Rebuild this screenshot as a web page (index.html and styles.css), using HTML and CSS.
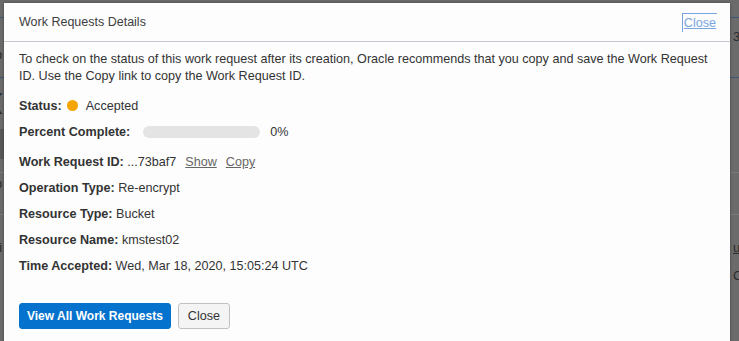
FILE: index.html
```html
<!DOCTYPE html>
<html lang="en">
<head>
<meta charset="utf-8">
<title>Work Requests Details</title>
<link rel="stylesheet" href="styles.css">
</head>
<body>
<div class="backdrop">
  <div class="bline blue l1"></div>
  <div class="btext t1"><span>r</span><span>3</span></div>
  <div class="btext t2"><span>p</span><span></span></div>
  <div class="bline blue l2"></div>
  <div class="btext t3"><span>(</span><span></span></div>
  <div class="bbox"></div>
  <div class="bline gray l3"></div>
  <div class="btext t4"><span>o</span><span></span></div>
  <div class="bline gray l4"></div>
  <div class="btext t5"><span>ri</span><span class="u">us</span></div>
  <div class="btext t6"><span>:</span><span>C</span></div>
  <div class="btext t7"><span>r</span><span></span></div>
</div>

<div class="modal" role="dialog" aria-labelledby="mtitle">
  <div class="modal-header">
    <h1 id="mtitle" class="modal-title">Work Requests Details</h1>
    <a href="#" class="close-link">Close</a>
  </div>
  <div class="modal-body">
    <p class="intro">To check on the status of this work request after its creation, Oracle recommends that you copy and save the Work Request ID. Use the Copy link to copy the Work Request ID.</p>
    <div class="row status-row"><span class="label">Status:</span><span class="dot"></span><span class="status-text">Accepted</span></div>
    <div class="row pct-row"><span class="label">Percent Complete:</span><span class="bar"><span class="fill" style="width:0%"></span></span><span class="pct">0%</span></div>
    <div class="row"><span class="label">Work Request ID:</span> <span>...73baf7</span><a href="#" class="act">Show</a><a href="#" class="act">Copy</a></div>
    <div class="row"><span class="label">Operation Type:</span> Re-encrypt</div>
    <div class="row"><span class="label">Resource Type:</span> Bucket</div>
    <div class="row"><span class="label">Resource Name:</span> kmstest02</div>
    <div class="row"><span class="label">Time Accepted:</span> Wed, Mar 18, 2020, 15:05:24 UTC</div>
    <div class="actions">
      <button class="btn primary">View All Work Requests</button>
      <button class="btn secondary">Close</button>
    </div>
  </div>
</div>
</body>
</html>
```
FILE: styles.css
```css
* { box-sizing: border-box; }
html, body { margin: 0; padding: 0; }
body {
  width: 739px;
  height: 341px;
  overflow: hidden;
  background: #6b6b6b;
  font-family: "Liberation Sans", Arial, sans-serif;
  font-size: 12.6px;
  color: #333;
  position: relative;
}

/* dimmed page underneath */
.backdrop { width: 739px; height: 341px; }
.bline { height: 1px; }
.bline.blue { background: #3e5774; }
.bline.gray { background: #7a7a7a; }
.l1 { margin-top: 17px; }
.btext {
  display: flex;
  justify-content: space-between;
  height: 18px;
  line-height: 18px;
  font-size: 13px;
  color: #2a2a2a;
}
.btext span { width: 12px; }
.btext span:first-child { margin-left: -5px; }
.btext span:last-child { margin-right: -6px; text-align: left; }
.btext .u { text-decoration: underline; }
.t1 { margin-top: 10px; }
.t2 { margin-top: 0; }
.l2 { margin-top: 13px; }
.t3 { margin-top: 15px; font-size: 22px; }
.bbox { margin-top: 18px; height: 30px; width: 6px; background: #585858; }
.l3 { margin-top: 13px; }
.t4 { margin-top: 2px; }
.l4 { margin-top: 21px; }
.t5 { margin-top: 24px; }
.t6 { margin-top: 10px; }
.t7 { margin-top: 8px; }

/* dialog */
.modal {
  position: absolute;
  left: 4px;
  top: 3px;
  width: 726px;
  height: 360px;
  background: #fdfdfd;
  box-shadow: 0 0 3px rgba(0,0,0,0.35);
}
.modal-header {
  height: 39px;
  border-bottom: 1px solid #c4c8d0;
  display: flex;
  justify-content: space-between;
  align-items: center;
  padding: 0 13px 0 15px;
}
.modal-title {
  margin: 0;
  font-size: 12.5px;
  font-weight: normal;
  color: #3d3d3d;
  line-height: 17px;
}
.close-link {
  font-size: 12.6px;
  color: #79a6df;
  text-decoration: underline;
  line-height: 17px;
  padding: 1px 1px 0 1px;
  border-top: 1px solid #79a6df;
  border-left: 1px solid #79a6df;
  margin-top: 1px;
}
.modal-body { padding: 9px 15px 0 15px; }
.intro {
  margin: 0 0 13px;
  line-height: 17px;
  color: #333;
}
.row {
  line-height: 17px;
  height: 17px;
  margin-bottom: 9px;
  white-space: nowrap;
}
.label { font-weight: bold; color: #333; }
.dot {
  display: inline-block;
  vertical-align: middle;
  width: 11px;
  height: 11px;
  border-radius: 50%;
  background: #f5a500;
  margin: -2px 8px 0 5px;
}
.pct-row { margin-bottom: 13px; }
.bar {
  display: inline-block;
  vertical-align: middle;
  width: 117px;
  height: 12px;
  border-radius: 6px;
  background: #e4e4e4;
  margin: -2px 10px 0 13px;
  overflow: hidden;
}
.fill { display: block; height: 100%; background: #0572ce; }
.act {
  color: #666;
  text-decoration: underline;
  margin-left: 9px;
}
.actions {
  display: flex;
  gap: 7px;
  margin-top: 28px;
}
.btn {
  font-family: "Liberation Sans", Arial, sans-serif;
  font-size: 12px;
  height: 26px;
  border-radius: 3px;
  padding: 0 7px;
  white-space: nowrap;
  cursor: pointer;
}
.btn.primary {
  background: #0572ce;
  border: 1px solid #0572ce;
  color: #fff;
  font-weight: bold;
}
.btn.secondary {
  font-size: 12.6px;
  background: #f4f4f4;
  border: 1px solid #c2c2c2;
  color: #333;
  padding: 0 9px;
}
```
